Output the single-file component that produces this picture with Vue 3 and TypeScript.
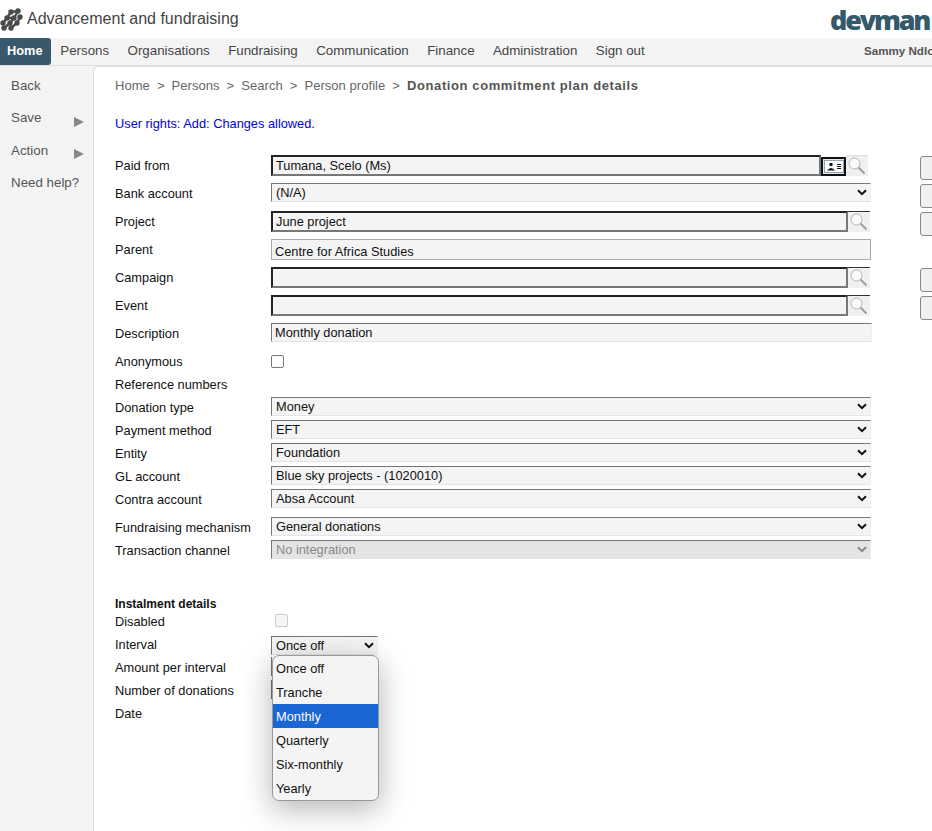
<template>
  <div class="page">
    <header class="top">
      <div class="brand">
        <svg class="mark" width="23" height="23" viewBox="0 0 23 23">
          <g stroke="#4a4a4a" stroke-width="2.4" stroke-linecap="round" fill="none">
            <path d="M11 4L18 3M7 10L11 4M14 10L18 3M3 15L7 10M10 15L14 10M17 15L20 9M4 20L10 15M11 20L17 15M7 10h7" />
          </g>
          <g fill="#4a4a4a">
            <circle v-for="d in markDots" :key="d[0] + '-' + d[1]" :cx="d[0]" :cy="d[1]" r="2.7" />
          </g>
        </svg>
        <span class="app-name">Advancement and fundraising</span>
      </div>
      <div class="logo">devman</div>
    </header>

    <nav class="nav">
      <a v-for="item in navItems" :key="item" class="nav-item" :class="{ active: item === 'Home' }">{{ item }}</a>
      <span class="user">Sammy Ndlovu</span>
    </nav>

    <div class="body">
      <aside class="side">
        <div v-for="item in sideItems" :key="item.label" class="side-item">
          <span>{{ item.label }}</span>
          <i v-if="item.arrow" class="tri"></i>
        </div>
      </aside>

      <main class="content">
        <div class="crumbs">
          <template v-for="c in crumbs" :key="c">
            <span>{{ c }}</span><span class="sep">&gt;</span>
          </template>
          <b>Donation commitment plan details</b>
        </div>
        <p class="rights">User rights: Add: Changes allowed.</p>

        <section class="form-top">
          <div v-for="row in topRows" :key="row.label" class="row row-tall">
            <label>{{ row.label }}</label>
            <div class="field-wrap">
              <div v-if="row.kind === 'lookup'" class="lookup" :class="{ 'with-card': row.card }">
                <div class="box strong">{{ row.value }}</div>
                <span v-if="row.card" class="card-btn">
                  <svg width="20" height="13" viewBox="0 0 20 13">
                    <rect x="0.5" y="0.5" width="19" height="12" fill="#fff" stroke="#8fa3b0" />
                    <circle cx="7" cy="4.5" r="1.7" fill="#111" />
                    <path d="M3 10.5 Q7 5.5 11 10.5 Z" fill="#111" />
                    <path d="M13 4.5h4M13 6.5h4M13 8.5h4" stroke="#111" />
                  </svg>
                </span>
                <span class="search">
                  <svg width="20" height="20" viewBox="0 0 20 20">
                    <circle cx="7.5" cy="7.5" r="5.5" fill="#fafafa" stroke="#b4b4b4" />
                    <path d="M11.5 11.5l6 6" stroke="#9a9a9a" stroke-width="1.8" />
                  </svg>
                </span>
              </div>
              <div v-else-if="row.kind === 'select'" class="box select">
                <span>{{ row.value }}</span>
                <svg class="chev" width="10" height="7" viewBox="0 0 10 7"><path d="M1 1.2l4 4 4-4" fill="none" stroke="#111" stroke-width="2" /></svg>
              </div>
              <div v-else-if="row.kind === 'plain'" class="box parent">{{ row.value }}</div>
              <div v-else-if="row.kind === 'desc'" class="box desc">{{ row.value }}</div>
            </div>
            <span v-if="row.side" class="side-btn"></span>
          </div>
        </section>

        <div class="row row-check">
          <label>Anonymous</label>
          <span class="check"></span>
        </div>
        <div class="row row-short"><label>Reference numbers</label></div>

        <section class="selects">
          <div v-for="row in midRows" :key="row.label" class="row row-short">
            <label>{{ row.label }}</label>
            <div class="box select"><span>{{ row.value }}</span><svg class="chev" width="10" height="7" viewBox="0 0 10 7"><path d="M1 1.2l4 4 4-4" fill="none" stroke="#111" stroke-width="2" /></svg></div>
          </div>
        </section>

        <section class="selects second">
          <div class="row row-short">
            <label>Fundraising mechanism</label>
            <div class="box select"><span>General donations</span><svg class="chev" width="10" height="7" viewBox="0 0 10 7"><path d="M1 1.2l4 4 4-4" fill="none" stroke="#111" stroke-width="2" /></svg></div>
          </div>
          <div class="row row-short">
            <label>Transaction channel</label>
            <div class="box select off"><span>No integration</span><svg class="chev" width="10" height="7" viewBox="0 0 10 7"><path d="M1 1.2l4 4 4-4" fill="none" stroke="#888" stroke-width="2" /></svg></div>
          </div>
        </section>

        <h4 class="sub">Instalment details</h4>
        <div class="row row-short">
          <label>Disabled</label>
          <span class="check off"></span>
        </div>
        <div class="row row-short">
          <label>Interval</label>
          <div class="interval">
            <div class="box select small"><span>Once off</span><svg class="chev" width="10" height="7" viewBox="0 0 10 7"><path d="M1 1.2l4 4 4-4" fill="none" stroke="#111" stroke-width="2" /></svg></div>
            <ul class="popup">
              <li v-for="o in intervals" :key="o" :class="{ sel: o === 'Monthly' }">{{ o }}</li>
            </ul>
          </div>
        </div>
        <div v-for="l in lowerRows" :key="l.label" class="row row-short">
          <label>{{ l.label }}</label>
          <div v-if="l.input" class="box stub"></div>
        </div>
      </main>
    </div>
  </div>
</template>

<script setup lang="ts">
interface TopRow {
  label: string
  kind: 'lookup' | 'select' | 'plain' | 'desc'
  value: string
  card?: boolean
  side?: boolean
}

const markDots = [
  [11, 4], [18, 3], [7, 10], [14, 10], [20, 9], [3, 15], [10, 15], [17, 15], [4, 20], [11, 20]
]

const navItems = ['Home', 'Persons', 'Organisations', 'Fundraising', 'Communication', 'Finance', 'Administration', 'Sign out']

const sideItems = [
  { label: 'Back', arrow: false },
  { label: 'Save', arrow: true },
  { label: 'Action', arrow: true },
  { label: 'Need help?', arrow: false }
]

const crumbs = ['Home', 'Persons', 'Search', 'Person profile']

const topRows: TopRow[] = [
  { label: 'Paid from', kind: 'lookup', value: 'Tumana, Scelo (Ms)', card: true, side: true },
  { label: 'Bank account', kind: 'select', value: '(N/A)', side: true },
  { label: 'Project', kind: 'lookup', value: 'June project', side: true },
  { label: 'Parent', kind: 'plain', value: 'Centre for Africa Studies' },
  { label: 'Campaign', kind: 'lookup', value: '', side: true },
  { label: 'Event', kind: 'lookup', value: '', side: true },
  { label: 'Description', kind: 'desc', value: 'Monthly donation' }
]

const midRows = [
  { label: 'Donation type', value: 'Money' },
  { label: 'Payment method', value: 'EFT' },
  { label: 'Entity', value: 'Foundation' },
  { label: 'GL account', value: 'Blue sky projects - (1020010)' },
  { label: 'Contra account', value: 'Absa Account' }
]

const intervals = ['Once off', 'Tranche', 'Monthly', 'Quarterly', 'Six-monthly', 'Yearly']

const lowerRows = [
  { label: 'Amount per interval', input: true },
  { label: 'Number of donations', input: true },
  { label: 'Date', input: false }
]
</script>

<style scoped>
.page {
  width: 932px;
  height: 831px;
  overflow: hidden;
  font-family: "Liberation Sans", Arial, sans-serif;
  font-size: 12.8px;
  color: #111;
  background: #fff;
}

.top {
  height: 38px;
  display: flex;
  justify-content: space-between;
  align-items: center;
}

.brand {
  display: flex;
  align-items: center;
  gap: 4px;
}

.app-name {
  font-size: 16px;
  color: #444;
}

.logo {
  font-family: "Open Sans", sans-serif;
  font-weight: 800;
  font-size: 27px;
  letter-spacing: -2.2px;
  color: #33596b;
  width: 102px;
  white-space: nowrap;
}

.nav {
  height: 27px;
  background: #f4f4f4;
  border-bottom: 1px solid #ddd;
  display: flex;
  align-items: stretch;
  font-size: 13.33px;
}

.nav-item {
  padding: 0 9.2px;
  line-height: 25px;
  color: #444;
}

.nav-item.active {
  background: #38596b;
  color: #fff;
  font-size: 12.8px;
  font-weight: 700;
  padding: 0 8.5px 0 7px;
  border-radius: 0 3px 3px 0;
}

.user {
  margin-left: auto;
  width: 68px;
  white-space: nowrap;
  font-size: 11.6px;
  font-weight: 700;
  line-height: 25px;
  color: #555;
}

.body {
  display: flex;
  height: 766px;
  background: #f4f4f4;
}

.side {
  width: 93px;
  flex: none;
  padding-top: 3px;
  color: #555;
  font-size: 13.33px;
}

.side-item {
  height: 32.5px;
  padding-left: 11px;
  display: flex;
  align-items: center;
  position: relative;
}

.tri {
  position: absolute;
  left: 74px;
  top: 15px;
  border-left: 10px solid #888;
  border-top: 5.5px solid transparent;
  border-bottom: 5.5px solid transparent;
}

.content {
  flex: 1;
  min-width: 0;
  background: #fff;
  border-left: 1px solid #ddd;
  border-top: 1px solid #ddd;
  border-top-left-radius: 6px;
  padding-left: 21px;
}

.crumbs {
  margin-top: 10px;
  height: 17px;
  line-height: 17px;
  font-size: 13px;
  letter-spacing: 0.05px;
  color: #666;
  display: flex;
}

.crumbs .sep {
  margin: 0 7px;
}

.crumbs b {
  letter-spacing: 0.6px;
  color: #555;
}

.rights {
  margin: 21px 0 0;
  color: #0000e0;
  line-height: 17px;
}

.form-top {
  margin-top: 23px;
}

.row {
  display: flex;
  align-items: flex-start;
}

.row > label {
  width: 156px;
  flex: none;
  line-height: 17px;
}

.row-tall {
  height: 28px;
}

.row-tall > label {
  padding-top: 2px;
}

.row-short {
  height: 23px;
}

.row-short > label {
  padding-top: 2px;
}

.field-wrap {
  width: 600px;
  flex: none;
}

.box {
  box-sizing: border-box;
  background: #f4f4f4;
  white-space: nowrap;
  overflow: hidden;
}

.lookup {
  display: flex;
  align-items: flex-start;
  width: 599px;
}

.lookup.with-card {
  width: 597px;
}

.strong {
  flex: 1;
  height: 21px;
  border: 2px solid;
  border-color: #222 #777 #777 #222;
  padding-left: 3px;
  line-height: 17px;
}

.card-btn {
  box-sizing: border-box;
  width: 25px;
  height: 19px;
  margin-top: 2px;
  border: 2px solid #111;
  background: #dfe7ee;
  display: flex;
  align-items: center;
  justify-content: center;
}

.search {
  width: 22px;
  height: 21px;
  flex: none;
  background: #f0f0f0;
  border-top: 1px solid #333;
  box-sizing: border-box;
  display: flex;
  align-items: center;
  justify-content: center;
}

.with-card .search {
  border-top-color: #ddd;
}

.select {
  width: 600px;
  height: 19px;
  border: 1px solid;
  border-color: #777 #f0f0f0 #e4e4e4 #777;
  padding-left: 4px;
  line-height: 16px;
  display: flex;
  justify-content: space-between;
  align-items: center;
}

.chev {
  margin-right: 3px;
}

.select.off {
  background: #e4e4e4;
  color: #888;
}

.select.small {
  width: 107px;
}

.parent {
  width: 600px;
  height: 21px;
  border: 1px solid #aaa;
  padding: 3px 3px 0;
  line-height: 17px;
}

.desc {
  width: 601px;
  height: 19px;
  border: 1px solid;
  border-color: #777 #eee #e4e4e4 #777;
  padding-left: 3px;
  line-height: 17px;
}

.side-btn {
  margin-left: 49px;
  margin-top: 1px;
  width: 24px;
  height: 24px;
  flex: none;
  box-sizing: border-box;
  border: 1px solid #888;
  border-radius: 3px;
  background: #f0f0f0;
}

.row-check {
  height: 21px;
  margin-top: 2px;
}

.check {
  box-sizing: border-box;
  width: 13px;
  height: 13px;
  border: 1px solid #777;
  border-radius: 2px;
  background: #fff;
  margin-top: 2px;
}

.check.off {
  border-color: #ccc;
  background: #f6f6f6;
  margin: 3px 0 0 4px;
}

.selects.second {
  margin-top: 5px;
}

.sub {
  margin: 34px 0 0;
  font-size: 12px;
  line-height: 14px;
  font-weight: 700;
}

.interval {
  position: relative;
  margin-top: 2px;
}

.popup {
  position: absolute;
  left: 1px;
  top: 19px;
  z-index: 5;
  width: 107px;
  box-sizing: border-box;
  margin: 0;
  padding: 0;
  list-style: none;
  border: 1px solid #999;
  border-radius: 7px;
  overflow: hidden;
  background: #f4f4f4;
  box-shadow: 0 8px 30px rgba(0, 0, 0, 0.3);
}

.popup li {
  height: 24px;
  line-height: 25px;
  padding-left: 3px;
}

.popup li.sel {
  background: #1a66d2;
  color: #fff;
}

.stub {
  width: 20px;
  height: 19px;
  border-left: 1px solid #777;
}
</style>

<style>
html,
body {
  margin: 0;
  overflow: hidden;
}
</style>
